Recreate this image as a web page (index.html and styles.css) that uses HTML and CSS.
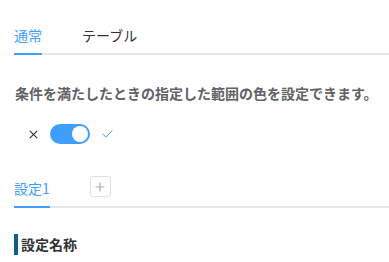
FILE: index.html
```html
<!DOCTYPE html>
<html lang="ja">
<head>
<meta charset="utf-8">
<link rel="stylesheet" href="styles.css">
</head>
<body>
<div class="page">
  <div class="tabs tabs-top">
    <div class="tab active">通常</div>
    <div class="tab">テーブル</div>
  </div>
  <p class="desc">条件を満たしたときの指定した範囲の色を設定できます。</p>
  <div class="switch-row">
    <svg class="icon-close" width="9" height="9" viewBox="0 0 9 9"><path d="M0.8 0.8 L8.2 8.2 M8.2 0.8 L0.8 8.2" stroke="#303133" stroke-width="1.1" fill="none"/></svg>
    <div class="switch"><span class="knob"></span></div>
    <svg class="icon-check" width="11" height="8" viewBox="0 0 11 8"><path d="M0.6 3.8 L3.9 7 L10.4 0.6" stroke="#409eff" stroke-width="1" fill="none"/></svg>
  </div>
  <div class="tabs tabs-sub">
    <div class="tab active">設定1</div>
    <button class="new-tab" type="button"><svg width="10" height="10" viewBox="0 0 10 10"><path d="M5 0.5 V9.5 M0.5 5 H9.5" stroke="#a8abb2" stroke-width="1.2" fill="none"/></svg></button>
  </div>
  <div class="section-title">設定名称</div>
</div>
</body>
</html>
```

FILE: styles.css
```css
html, body {
  margin: 0;
  padding: 0;
  background: #ffffff;
}
body {
  font-family: "Noto Sans CJK JP", "Noto Sans", sans-serif;
  font-size: 14px;
  color: #303133;
  overflow: hidden;
}
.page {
  padding: 15px 0 0 14px;
}
.tabs {
  position: relative;
  display: flex;
  align-items: flex-start;
  height: 40px;
}
.tabs::after {
  content: "";
  position: absolute;
  left: 0;
  right: 0;
  bottom: 0;
  height: 2px;
  background: #e4e7ed;
}
.tab {
  position: relative;
  height: 40px;
  line-height: 40px;
  margin-right: 40px;
  color: #303133;
  white-space: nowrap;
}
.tab.active {
  color: #409eff;
}
.tab.active::after {
  content: "";
  position: absolute;
  left: 0;
  right: 0;
  bottom: 0;
  height: 2px;
  background: #409eff;
  z-index: 1;
}
.desc {
  margin: 28px 0 0 1px;
  line-height: 20px;
  font-weight: bold;
  color: #606266;
  white-space: nowrap;
}
.switch-row {
  display: flex;
  align-items: center;
  height: 20px;
  margin: 21px 0 0 15px;
}
.icon-close {
  display: block;
  margin-right: 12px;
}
.switch {
  position: relative;
  width: 40px;
  height: 20px;
  border-radius: 10px;
  background: #409eff;
}
.knob {
  position: absolute;
  top: 2px;
  right: 2px;
  width: 16px;
  height: 16px;
  border-radius: 50%;
  background: #ffffff;
}
.icon-check {
  display: block;
  margin-left: 12px;
}
.tabs-sub {
  margin-top: 24px;
}
.new-tab {
  display: flex;
  align-items: center;
  justify-content: center;
  box-sizing: border-box;
  width: 21px;
  height: 21px;
  margin-top: 8px;
  padding: 0;
  border: 1px solid #dcdfe6;
  border-radius: 3px;
  background: #ffffff;
}
.new-tab svg {
  display: block;
}
.section-title {
  margin-top: 26px;
  height: 21px;
  line-height: 21px;
  border-left: 4px solid #0d5e8d;
  padding-left: 3px;
  font-weight: bold;
  color: #303133;
}
```
